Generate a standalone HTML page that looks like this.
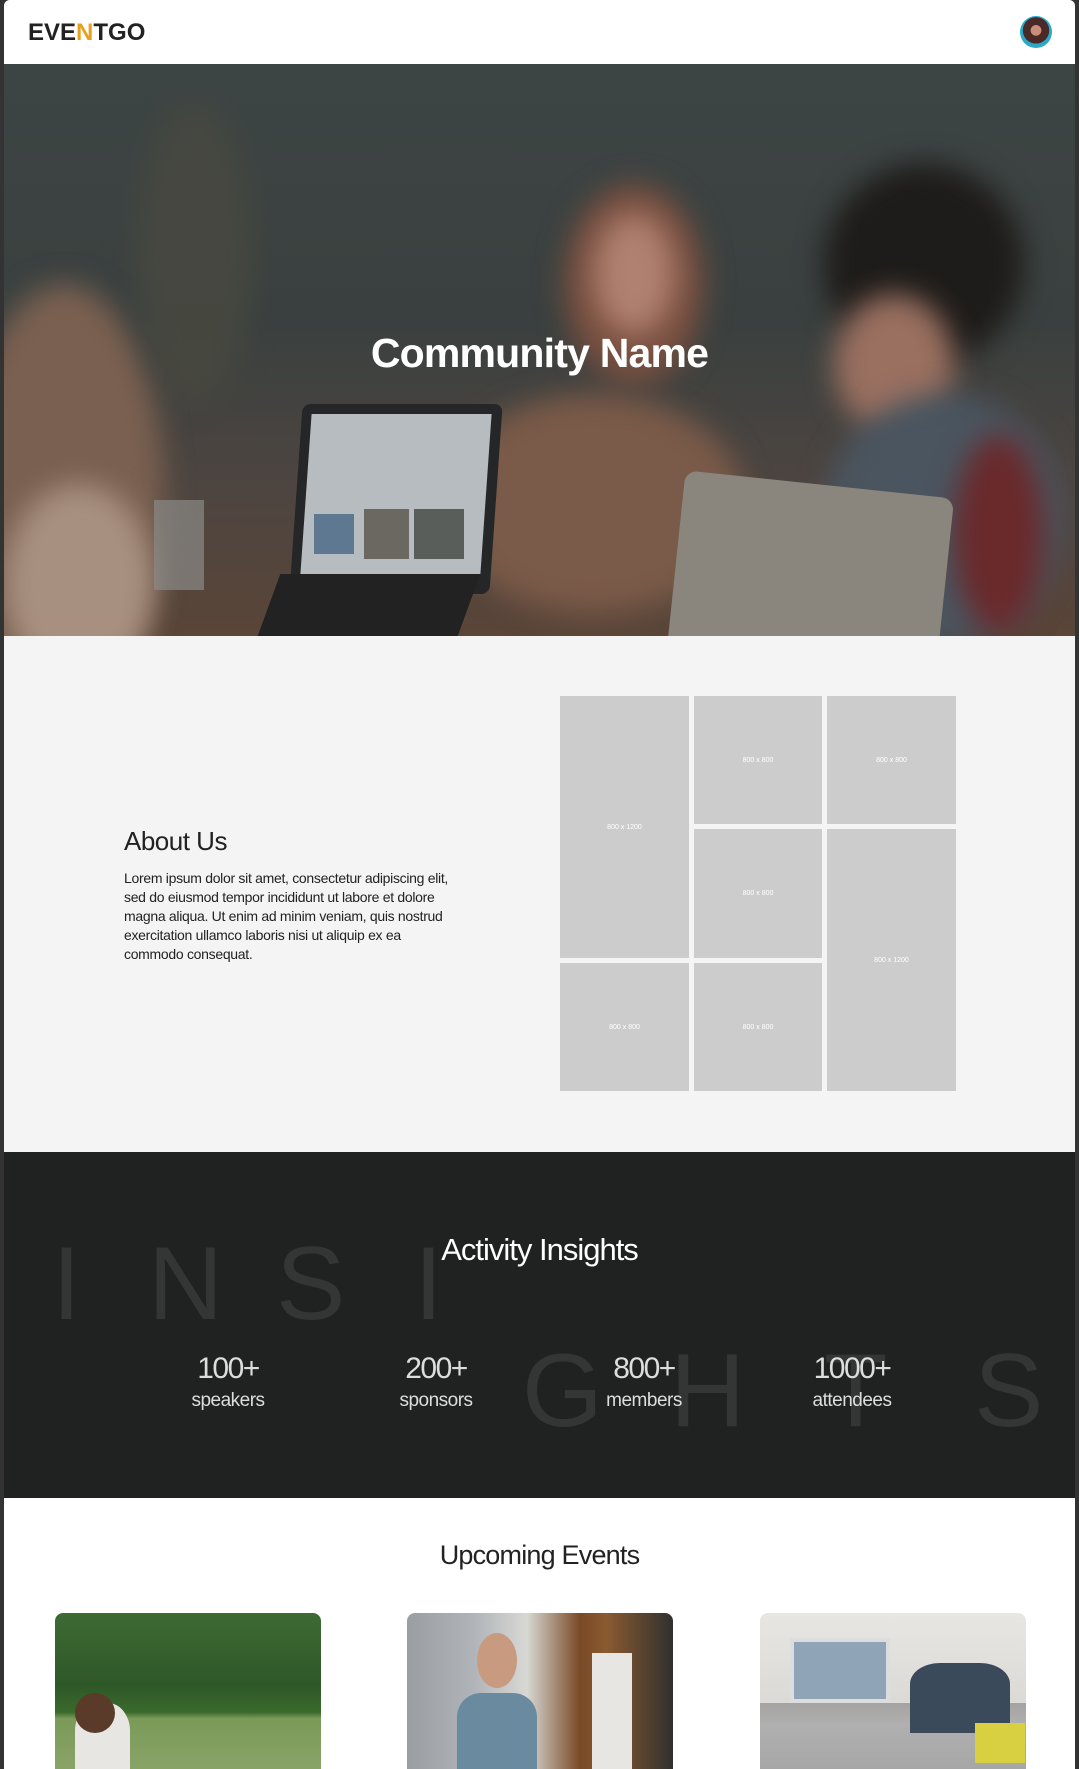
<!DOCTYPE html>
<html><head><meta charset="utf-8"><style>
*{margin:0;padding:0;box-sizing:border-box}
body{width:1079px;height:1769px;overflow:hidden;background:#333;font-family:"Liberation Sans",sans-serif;position:relative}
.frame{position:absolute;left:4px;top:0;width:1071px;height:1769px;background:#fff;overflow:hidden;border-radius:6px 6px 0 0}
.abs{position:absolute}
header{position:absolute;left:0;top:0;width:1071px;height:64px;background:#fff}
.logo{position:absolute;left:24px;top:19px;font-weight:bold;font-size:24px;letter-spacing:0px;color:#222;font-family:"Liberation Sans Narrow","Liberation Sans",sans-serif}
.logo b{color:#e8a020}
.avatar{position:absolute;left:1016px;top:16px;width:32px;height:32px;border-radius:50%;background:radial-gradient(circle at 50% 45%,#c98e78 0 22%,#4a2a28 23% 55%,#2aa9c9 56%)}
.hero{position:absolute;left:0;top:64px;width:1071px;height:572px;background:linear-gradient(180deg,#3d4544 0%,#3a403f 45%,#4e4540 75%,#5a4538 100%);overflow:hidden}
.b{position:absolute;border-radius:50%;filter:blur(14px)}
.hero h1{position:absolute;left:0;width:1071px;top:266px;text-align:center;color:#fff;font-size:41px;font-weight:bold;letter-spacing:-0.8px}
.about{position:absolute;left:0;top:636px;width:1071px;height:516px;background:#f4f4f4}
.about h2{position:absolute;left:120px;top:190px;font-size:26px;font-weight:normal;color:#222;letter-spacing:-0.5px}
.about p{position:absolute;left:120px;top:233px;width:420px;font-size:14px;line-height:19px;color:#222;letter-spacing:-0.3px}
.c{position:absolute;background:#ccc;color:#fff;font-size:7px;display:flex;align-items:center;justify-content:center}
.ins{position:absolute;left:0;top:1152px;width:1071px;height:346px;background:#202121;overflow:hidden}
.big{position:absolute;color:#343535;font-size:104px;font-weight:normal;line-height:1}
.ins h2{position:absolute;left:0;width:1071px;top:80px;text-align:center;color:#fff;font-size:31px;font-weight:normal;letter-spacing:-1px}
.st{position:absolute;top:200px;width:200px;text-align:center;color:#ddd}
.st .n{font-size:30px;letter-spacing:-1.5px}
.st .l{font-size:19px;margin-top:4px;letter-spacing:-0.5px}
.ev{position:absolute;top:1498px;left:0;width:1071px;height:271px;background:#fff}
.ev h2{position:absolute;left:0;width:1071px;top:42px;text-align:center;font-size:27px;font-weight:normal;color:#222;letter-spacing:-0.8px}
.card{position:absolute;top:115px;width:266px;height:160px;border-radius:8px 8px 0 0;overflow:hidden}
</style></head><body>
<div class="frame">
<header><div class="logo">EVE<b>N</b>TGO</div><div class="avatar"></div></header>
<div class="hero">
 <div class="b" style="left:-40px;top:220px;width:200px;height:420px;background:#7a6050"></div>
 <div class="b" style="left:0;top:420px;width:150px;height:200px;background:#a89080"></div>
 <div class="b" style="left:130px;top:40px;width:120px;height:300px;background:#4a4a40;opacity:.7"></div>
 <div class="b" style="left:560px;top:120px;width:140px;height:200px;background:#7a5040"></div>
 <div class="b" style="left:590px;top:150px;width:80px;height:120px;background:#b08070"></div>
 <div class="b" style="left:440px;top:330px;width:300px;height:220px;background:#7a5a48"></div>
 <div class="b" style="left:820px;top:100px;width:200px;height:200px;background:#1e1c1a"></div>
 <div class="b" style="left:830px;top:230px;width:120px;height:140px;background:#9a7060"></div>
 <div class="b" style="left:820px;top:330px;width:240px;height:250px;background:#4a5560"></div>
 <div class="b" style="left:950px;top:370px;width:90px;height:200px;background:#6a2a2c"></div>
 <div class="abs" style="left:292px;top:340px;width:200px;height:190px;background:#252627;transform:skewX(-4deg);border-radius:8px"></div>
 <div class="abs" style="left:302px;top:350px;width:180px;height:160px;background:#b6bcc0;transform:skewX(-4deg)"></div>
 <div class="abs" style="left:310px;top:450px;width:40px;height:40px;background:#5d7890"></div>
 <div class="abs" style="left:360px;top:445px;width:45px;height:50px;background:#6a6860"></div>
 <div class="abs" style="left:410px;top:445px;width:50px;height:50px;background:#5a5e5a"></div>
 <div class="abs" style="left:265px;top:510px;width:200px;height:62px;background:#222;transform:skewX(-20deg)"></div>
 <div class="abs" style="left:672px;top:420px;width:270px;height:170px;background:#8a857d;border-radius:12px 12px 0 0;transform:rotate(6deg)"></div>
 <div class="abs" style="left:150px;top:436px;width:50px;height:90px;background:#8a8a88;opacity:.7"></div>
 <h1>Community Name</h1>
</div>
<div class="about">
 <h2>About Us</h2>
 <p>Lorem ipsum dolor sit amet, consectetur adipiscing elit,<br>sed do eiusmod tempor incididunt ut labore et dolore<br>magna aliqua. Ut enim ad minim veniam, quis nostrud<br>exercitation ullamco laboris nisi ut aliquip ex ea<br>commodo consequat.</p>
 <div class="c" style="left:556px;top:60px;width:129px;height:262px">800 x 1200</div>
 <div class="c" style="left:556px;top:327px;width:129px;height:128px">800 x 800</div>
 <div class="c" style="left:690px;top:60px;width:128px;height:128px">800 x 800</div>
 <div class="c" style="left:690px;top:193px;width:128px;height:129px">800 x 800</div>
 <div class="c" style="left:690px;top:327px;width:128px;height:128px">800 x 800</div>
 <div class="c" style="left:823px;top:60px;width:129px;height:128px">800 x 800</div>
 <div class="c" style="left:823px;top:193px;width:129px;height:262px">800 x 1200</div>
</div>
<div class="ins">
 <div class="big" style="left:48px;top:80px">I</div>
 <div class="big" style="left:144px;top:80px">N</div>
 <div class="big" style="left:272px;top:80px">S</div>
 <div class="big" style="left:410px;top:80px">I</div>
 <div class="big" style="left:518px;top:187px">G</div>
 <div class="big" style="left:666px;top:187px">H</div>
 <div class="big" style="left:820px;top:187px">T</div>
 <div class="big" style="left:970px;top:187px">S</div>
 <h2>Activity Insights</h2>
 <div class="st" style="left:124px"><div class="n">100+</div><div class="l">speakers</div></div>
 <div class="st" style="left:332px"><div class="n">200+</div><div class="l">sponsors</div></div>
 <div class="st" style="left:540px"><div class="n">800+</div><div class="l">members</div></div>
 <div class="st" style="left:748px"><div class="n">1000+</div><div class="l">attendees</div></div>
</div>
<div class="ev">
 <h2>Upcoming Events</h2>
 <div class="card" style="left:51px;background:linear-gradient(180deg,#3e6a34 0%,#2e5828 45%,#3a6a2c 62%,#7a9a58 66%,#8aa468 100%)">
  <div class="abs" style="left:20px;top:90px;width:55px;height:70px;background:#e8e6e2;border-radius:40% 40% 0 0"></div>
  <div class="abs" style="left:20px;top:80px;width:40px;height:40px;background:#5a3a28;border-radius:50%"></div>
 </div>
 <div class="card" style="left:403px;background:linear-gradient(90deg,#9a9ea2 0%,#b0b4b8 25%,#d8d8d4 45%,#7a4a26 65%,#8a5a30 75%,#30302e 100%)">
  <div class="abs" style="left:50px;top:80px;width:80px;height:80px;background:#6a8aa0;border-radius:30% 30% 0 0"></div>
  <div class="abs" style="left:70px;top:20px;width:40px;height:55px;background:#c89a80;border-radius:50%"></div>
  <div class="abs" style="left:185px;top:40px;width:40px;height:120px;background:#e8e6e2"></div>
 </div>
 <div class="card" style="left:756px;background:linear-gradient(180deg,#e8e6e2 0%,#dcdad6 55%,#f0f0f0 70%,#e0e0e0 100%)">
  <div class="abs" style="left:0;top:90px;width:266px;height:70px;background:#3a3a3a;opacity:.35"></div>
  <div class="abs" style="left:30px;top:25px;width:100px;height:65px;background:#90a4b8;border:4px solid #ddd"></div>
  <div class="abs" style="left:150px;top:50px;width:100px;height:70px;background:#3a4a5a;border-radius:30% 30% 0 0"></div>
  <div class="abs" style="left:215px;top:110px;width:50px;height:40px;background:#d8d040"></div>
 </div>
</div>
</div>
</body></html>
